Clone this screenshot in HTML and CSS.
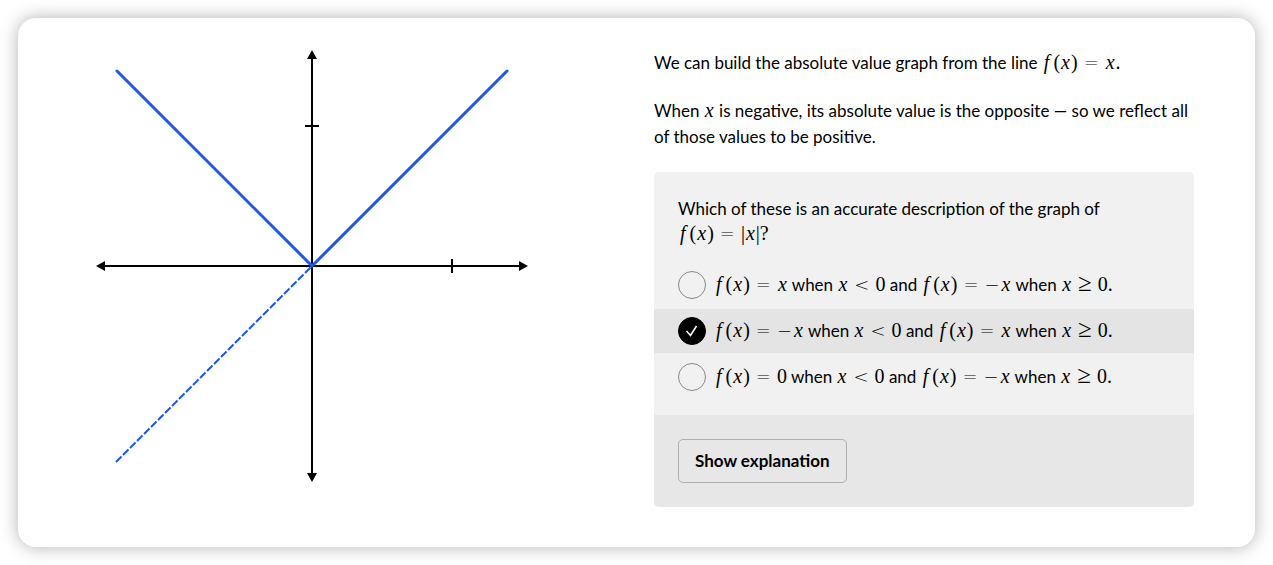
FILE: index.html
```html
<!DOCTYPE html>
<html lang="en">
<head>
<meta charset="utf-8">
<meta name="viewport" content="width=device-width, initial-scale=1">
<title>Absolute value graph</title>
<link rel="stylesheet" href="styles.css">
</head>
<body>
<main class="card">
  <svg class="graph" viewBox="0 0 468 468" role="img" aria-label="Graph of the absolute value function">
    <g stroke="#000" stroke-width="2">
      <path d="M26 234H442M234 26V442M374 227V241M227 94H241"/>
    </g>
    <path d="M18 234l9-5v10zM450 234l-9-5v10zM234 18l-5 9h10zM234 450l-5-9h10z"/>
    <path d="M38 430L234 234" fill="none" stroke="#1f56ee" stroke-width="2" stroke-dasharray="7.800 2.100"/>
    <path d="M39 39L234 234L429 39" fill="none" stroke="#1f56ee" stroke-width="3" stroke-linecap="round"/>
  </svg>
  <section class="lesson">
    <p class="text">We can build the absolute value graph from the line <span class="math"><i class="f">f</i><b>(</b><i>x</i><b>)</b><span class="rel">=</span><i>x</i>.</span></p>
    <p class="text">When <span class="math"><i>x</i></span> is negative, its absolute value is the opposite — so we reflect all of those values to be positive.</p>
    <div class="quiz">
      <fieldset class="question">
        <legend class="prompt">Which of these is an accurate description of the graph of <span class="math"><i class="f">f</i><b>(</b><i>x</i><b>)</b><span class="rel">=</span><b>|</b><i>x</i><b>|</b>?</span></legend>
        <label class="option">
          <span class="mark"><input type="radio" name="answer"></span>
          <span class="answer"><span class="math"><i class="f">f</i><b>(</b><i>x</i><b>)</b><span class="rel">=</span><i>x</i></span> when <span class="math"><i>x</i><span class="rel">&lt;</span>0</span> and <span class="math"><i class="f">f</i><b>(</b><i>x</i><b>)</b><span class="rel">=</span><span class="neg">−</span><i>x</i></span> when <span class="math"><i>x</i><span class="rel ge">≥</span>0.</span></span>
        </label>
        <label class="option">
          <span class="mark"><input type="radio" name="answer" checked><svg class="tick" viewBox="0 0 28 28" aria-hidden="true"><path d="M8.500 14L12.500 18.500L18.500 9" fill="none" stroke="#fff" stroke-width="1.600"/></svg></span>
          <span class="answer"><span class="math"><i class="f">f</i><b>(</b><i>x</i><b>)</b><span class="rel">=</span><span class="neg">−</span><i>x</i></span> when <span class="math"><i>x</i><span class="rel">&lt;</span>0</span> and <span class="math"><i class="f">f</i><b>(</b><i>x</i><b>)</b><span class="rel">=</span><i>x</i></span> when <span class="math"><i>x</i><span class="rel ge">≥</span>0.</span></span>
        </label>
        <label class="option">
          <span class="mark"><input type="radio" name="answer"></span>
          <span class="answer"><span class="math"><i class="f">f</i><b>(</b><i>x</i><b>)</b><span class="rel">=</span>0</span> when <span class="math"><i>x</i><span class="rel">&lt;</span>0</span> and <span class="math"><i class="f">f</i><b>(</b><i>x</i><b>)</b><span class="rel">=</span><span class="neg">−</span><i>x</i></span> when <span class="math"><i>x</i><span class="rel ge">≥</span>0.</span></span>
        </label>
      </fieldset>
      <div class="actions"><button class="button" type="button">Show explanation</button></div>
    </div>
  </section>
</main>
</body>
</html>
```
FILE: styles.css
```css
* { box-sizing: border-box; }
body {
  margin: 0;
  padding: 18px;
  background: #fff;
  color: #000;
  font: 17px/26px Lato, sans-serif;
}
.card {
  display: grid;
  grid-template-columns: 1fr 1fr;
  gap: 36px;
  align-items: start;
  padding: 14px 61px 40px 60px;
  border-radius: 18px;
  background: #fff;
  box-shadow: 0 0 18px rgba(0, 0, 0, 0.3);
}
.graph { display: block; width: 100%; max-width: 468px; }
.lesson { padding-top: 18px; }
.text { margin: 0 0 22px; }
.math {
  font-family: "Liberation Serif", serif;
  font-size: 20px;
  line-height: 20px;
  white-space: nowrap;
}
.math i { margin: 0 1px; }
.math .f { margin: 0 4px 0 2px; }
.math b { font-weight: 400; }
.rel, .neg {
  font-family: "DejaVu Sans", sans-serif;
  font-size: 18px;
  font-weight: 200;
}
.rel { margin: 0 6px; }
.neg { margin-right: 1px; }
.ge {
  font-family: "Liberation Serif", serif;
  font-size: 25px;
}
.quiz { border-radius: 5px; overflow: hidden; background: #f1f1f1; }
.question {
  display: flex;
  flex-direction: column;
  gap: 2px;
  margin: 0;
  padding: 24px 0 16px;
  border: 0;
}
.prompt { float: left; margin-bottom: 15px; padding: 0 72px 0 24px; line-height: 25px; }
.option {
  display: flex;
  align-items: center;
  gap: 8px;
  min-height: 44px;
  padding: 0 24px;
  font-size: 17px;
  cursor: pointer;
}
.option:has(input:checked) { background: #e4e4e4; }
.mark { display: grid; flex: none; }
.mark > * { grid-area: 1 / 1; width: 28px; height: 28px; }
.mark input {
  appearance: none;
  margin: 0;
  border: 1px solid #888;
  border-radius: 50%;
}
.mark input:checked { border-color: #000; background: #000; }
.tick { pointer-events: none; }
.actions { padding: 24px; background: #e7e7e7; }
.button {
  height: 44px;
  padding: 0 16px;
  border: 1px solid #b0b0b0;
  border-radius: 5px;
  background: transparent;
  color: #000;
  font: 700 17px/24px Lato, sans-serif;
}
```
